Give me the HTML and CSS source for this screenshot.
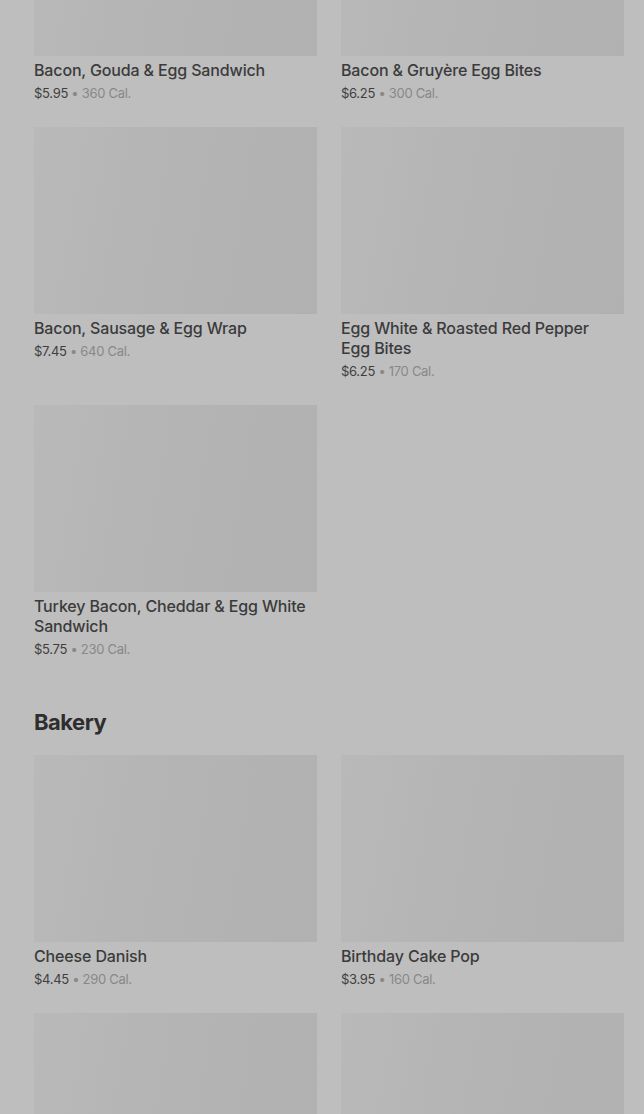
FILE: index.html
```html
<!DOCTYPE html>
<html lang="en">
<head>
    <meta charset="UTF-8">
    <meta name="viewport" content="width=device-width, initial-scale=1.0">
    <title>Menu</title>
    <link rel="stylesheet" href="styles.css">
</head>
<body>
    <div class="menu">
        <section class="category">
            <div class="grid">
                <div class="item">
                    <div class="thumb"></div>
                    <div class="name">Bacon, Gouda &amp; Egg Sandwich</div>
                    <div class="meta"><span class="price">$5.95</span> • <span class="cal">360 Cal.</span></div>
                </div>
                <div class="item">
                    <div class="thumb"></div>
                    <div class="name">Bacon &amp; Gruyère Egg Bites</div>
                    <div class="meta"><span class="price">$6.25</span> • <span class="cal">300 Cal.</span></div>
                </div>
                <div class="item">
                    <div class="thumb"></div>
                    <div class="name">Bacon, Sausage &amp; Egg Wrap</div>
                    <div class="meta"><span class="price">$7.45</span> • <span class="cal">640 Cal.</span></div>
                </div>
                <div class="item">
                    <div class="thumb"></div>
                    <div class="name">Egg White &amp; Roasted Red Pepper Egg Bites</div>
                    <div class="meta"><span class="price">$6.25</span> • <span class="cal">170 Cal.</span></div>
                </div>
                <div class="item">
                    <div class="thumb"></div>
                    <div class="name">Turkey Bacon, Cheddar &amp; Egg White Sandwich</div>
                    <div class="meta"><span class="price">$5.75</span> • <span class="cal">230 Cal.</span></div>
                </div>
            </div>
        </section>

        <section class="category">
            <h2>Bakery</h2>
            <div class="grid">
                <div class="item">
                    <div class="thumb"></div>
                    <div class="name">Cheese Danish</div>
                    <div class="meta"><span class="price">$4.45</span> • <span class="cal">290 Cal.</span></div>
                </div>
                <div class="item">
                    <div class="thumb"></div>
                    <div class="name">Birthday Cake Pop</div>
                    <div class="meta"><span class="price">$3.95</span> • <span class="cal">160 Cal.</span></div>
                </div>
                <!-- next row, only the photos are in view -->
                <div class="item">
                    <div class="thumb"></div>
                </div>
                <div class="item">
                    <div class="thumb"></div>
                </div>
            </div>
        </section>
    </div>
</body>
</html>
```

FILE: styles.css
```css
body {
    font-family: Inter, "Noto Sans", Arial, sans-serif;
    background-color: #bebebe;
    margin: 0;
    padding: 0;
    height: 1114px;
    overflow: hidden;
}

/* page is scrolled: first row's photos are cut off at the top */
.menu {
    width: 590px;
    margin: -131px 0 0 34px;
}

.category + .category {
    margin-top: 50px;
}

h2 {
    margin: 0 0 19px;
    font-size: 22px;
    line-height: 28px;
    font-weight: 700;
    letter-spacing: -0.5px;
    color: #2e2e2e;
}

.grid {
    display: grid;
    grid-template-columns: 283px 283px;
    column-gap: 24px;
    row-gap: 25px;
}

.thumb {
    height: 187px;
    background: linear-gradient(100deg, #b9b9b9 0%, #b4b4b4 45%, #b1b1b1 100%);
}

.name {
    margin-top: 4px;
    padding-right: 8px;
    font-size: 16px;
    line-height: 20px;
    font-weight: 500;
    letter-spacing: -0.15px;
    color: #3b3b3b;
}

.meta {
    margin-top: 4px;
    font-size: 13px;
    line-height: 18px;
    letter-spacing: -0.3px;
    color: #888;
}

.price {
    color: #3e3e3e;
}
```
